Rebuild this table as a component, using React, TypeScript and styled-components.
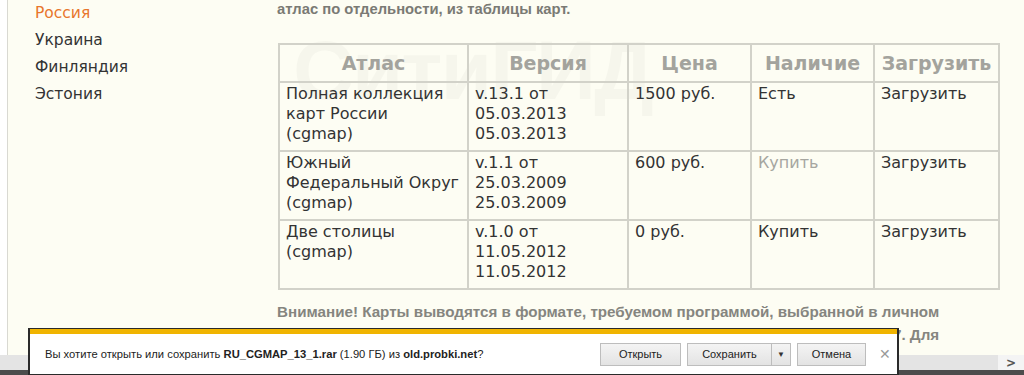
import React from "react";
import styled, { createGlobalStyle } from "styled-components";

const GlobalStyle = createGlobalStyle`
  html, body { margin: 0; padding: 0; background: #fdfdf3; overflow: hidden; }
  #root { width: 1024px; height: 375px; }
`;

const Screen = styled.div`
  position: relative;
  width: 1024px;
  height: 375px;
  display: flex;
  flex-direction: column;
  overflow: hidden;
`;

const Page = styled.div`
  flex: 0 0 355px;
  display: flex;
  background: #fdfdf3;
  overflow: hidden;
`;

const Gutter = styled.div`
  width: 7px;
  background: #ffffff;
  border-right: 1px solid #d9d9d2;
`;

const Sidebar = styled.nav`
  width: 242px;
  padding-left: 27px;
  display: flex;
  flex-direction: column;
`;

const NavItem = styled.div<{ $active?: boolean }>`
  font-family: "DejaVu Sans", Verdana, sans-serif;
  font-size: 15.5px;
  line-height: 27px;
  color: ${(p) => (p.$active ? "#e8762c" : "#333333")};
`;

const Main = styled.main`
  position: relative;
  width: 747px;
  display: flex;
  flex-direction: column;
`;

const Lead = styled.p`
  margin: 0;
  font-family: "Liberation Sans", Arial, sans-serif;
  font-weight: bold;
  font-size: 14.8px;
  line-height: 18px;
  color: #7a7a74;
`;

const Watermark = styled.div`
  position: absolute;
  left: 16px;
  top: 28px;
  font-family: "Liberation Sans", Arial, sans-serif;
  font-weight: bold;
  font-size: 84px;
  line-height: 84px;
  letter-spacing: -2px;
  color: rgba(0, 0, 0, 0.028);
  white-space: nowrap;
`;

const Table = styled.table`
  position: relative;
  margin: 25px 0 0 1px;
  width: 720px;
  border-collapse: collapse;
  table-layout: fixed;
  font-family: "DejaVu Sans", Verdana, sans-serif;
`;

const Th = styled.th`
  border: 2px solid #d2d2c9;
  padding: 6px 2px 6px;
  font-size: 19px;
  line-height: 24px;
  font-weight: bold;
  color: #a3a39d;
  text-align: center;
  white-space: nowrap;
`;

const Td = styled.td<{ $muted?: boolean }>`
  border: 2px solid #d2d2c9;
  padding: 1px 6px 6px;
  font-size: 16px;
  line-height: 20px;
  color: ${(p) => (p.$muted ? "#a6a6a0" : "#333333")};
  vertical-align: top;
  white-space: nowrap;
`;

const Note = styled.p`
  margin: 10px 0 0;
  font-family: "Liberation Sans", Arial, sans-serif;
  font-weight: bold;
  font-size: 15.2px;
  line-height: 23px;
  color: #85857f;
  white-space: nowrap;
`;

const ScrollRow = styled.div`
  flex: 0 0 15px;
  display: flex;
  background: #e4e4e4;
`;

const ScrollTrack = styled.div`
  flex: 1;
`;

const ScrollArrow = styled.div`
  width: 26px;
  display: flex;
  align-items: center;
  justify-content: center;
  background: #f4f4f4;
  color: #555;
  font-family: "DejaVu Sans", sans-serif;
  font-size: 12px;
  font-weight: bold;
`;

const Taskbar = styled.div`
  flex: 0 0 5px;
  background: #4c4c4c;
`;

const DownloadBar = styled.div`
  position: absolute;
  left: 28px;
  top: 328px;
  width: 867px;
  height: 40px;
  background: #ffffff;
  border: 2px solid #2a2a2a;
  border-top: 1px solid #2a2a2a;
  box-shadow: inset 0 5px 0 #f0b400;
  display: flex;
  align-items: center;
  padding-top: 5px;
  box-sizing: content-box;
  font-family: "Liberation Sans", Arial, sans-serif;
  font-size: 11.2px;
  color: #222;
`;

const Message = styled.div`
  flex: 1;
  padding-left: 15px;
  white-space: nowrap;
`;

const Buttons = styled.div`
  display: flex;
  align-items: center;
  gap: 6px;
  padding-right: 2px;
`;

const Btn = styled.button<{ $w: number }>`
  width: ${(p) => p.$w}px;
  height: 23px;
  border: 1px solid #bdbdbd;
  background: linear-gradient(#f4f4f4, #e3e3e3);
  font-family: "Liberation Sans", Arial, sans-serif;
  font-size: 11px;
  color: #222;
  padding: 0;
`;

const Split = styled.div`
  display: flex;
`;

const SplitArrow = styled.button`
  width: 19px;
  height: 23px;
  border: 1px solid #bdbdbd;
  border-left: none;
  background: linear-gradient(#f4f4f4, #e3e3e3);
  color: #333;
  font-size: 8px;
  padding: 0;
`;

const Close = styled.span`
  width: 20px;
  text-align: center;
  font-size: 14px;
  color: #9a9a9a;
  margin-left: 3px;
`;

const rows = [
  {
    atlas: ["Полная коллекция", "карт России", "(cgmap)"],
    ver: ["v.13.1 от", "05.03.2013", "05.03.2013"],
    price: "1500 руб.",
    avail: "Есть",
    muted: false,
  },
  {
    atlas: ["Южный", "Федеральный Округ", "(cgmap)"],
    ver: ["v.1.1 от", "25.03.2009", "25.03.2009"],
    price: "600 руб.",
    avail: "Купить",
    muted: true,
  },
  {
    atlas: ["Две столицы", "(cgmap)"],
    ver: ["v.1.0 от", "11.05.2012", "11.05.2012"],
    price: "0 руб.",
    avail: "Купить",
    muted: false,
  },
];

const Lines = ({ lines }: { lines: string[] }) => (
  <>
    {lines.map((l, i) => (
      <React.Fragment key={i}>
        {i > 0 && <br />}
        {l}
      </React.Fragment>
    ))}
  </>
);

export default function App() {
  return (
    <Screen>
      <GlobalStyle />
      <Page>
        <Gutter />
        <Sidebar>
          <NavItem $active>Россия</NavItem>
          <NavItem>Украина</NavItem>
          <NavItem>Финляндия</NavItem>
          <NavItem>Эстония</NavItem>
        </Sidebar>
        <Main>
          <Lead>атлас по отдельности, из таблицы карт.</Lead>
          <Watermark>СитиГИД</Watermark>
          <Table>
            <colgroup>
              <col style={{ width: 189 }} />
              <col style={{ width: 160 }} />
              <col style={{ width: 123 }} />
              <col style={{ width: 123 }} />
              <col style={{ width: 125 }} />
            </colgroup>
            <thead>
              <tr>
                <Th>Атлас</Th>
                <Th>Версия</Th>
                <Th>Цена</Th>
                <Th>Наличие</Th>
                <Th>Загрузить</Th>
              </tr>
            </thead>
            <tbody>
              {rows.map((r, i) => (
                <tr key={i}>
                  <Td>
                    <Lines lines={r.atlas} />
                  </Td>
                  <Td>
                    <Lines lines={r.ver} />
                  </Td>
                  <Td>{r.price}</Td>
                  <Td $muted={r.muted}>{r.avail}</Td>
                  <Td>Загрузить</Td>
                </tr>
              ))}
            </tbody>
          </Table>
          <Note>
            Внимание! Карты выводятся в формате, требуемом программой, выбранной в личном
            <br />
            кабинете пользователя. Поддерживаются версии программы СитиГИД 5, 6, 6.5 и 7. Для
          </Note>
        </Main>
      </Page>
      <ScrollRow>
        <ScrollTrack />
        <ScrollArrow>&gt;</ScrollArrow>
      </ScrollRow>
      <Taskbar />
      <DownloadBar>
        <Message>
          Вы хотите открыть или сохранить <b>RU_CGMAP_13_1.rar</b> (1.90 ГБ) из{" "}
          <b>old.probki.net</b>?
        </Message>
        <Buttons>
          <Btn $w={81}>Открыть</Btn>
          <Split>
            <Btn $w={85}>Сохранить</Btn>
            <SplitArrow>▼</SplitArrow>
          </Split>
          <Btn $w={69}>Отмена</Btn>
          <Close>✕</Close>
        </Buttons>
      </DownloadBar>
    </Screen>
  );
}
